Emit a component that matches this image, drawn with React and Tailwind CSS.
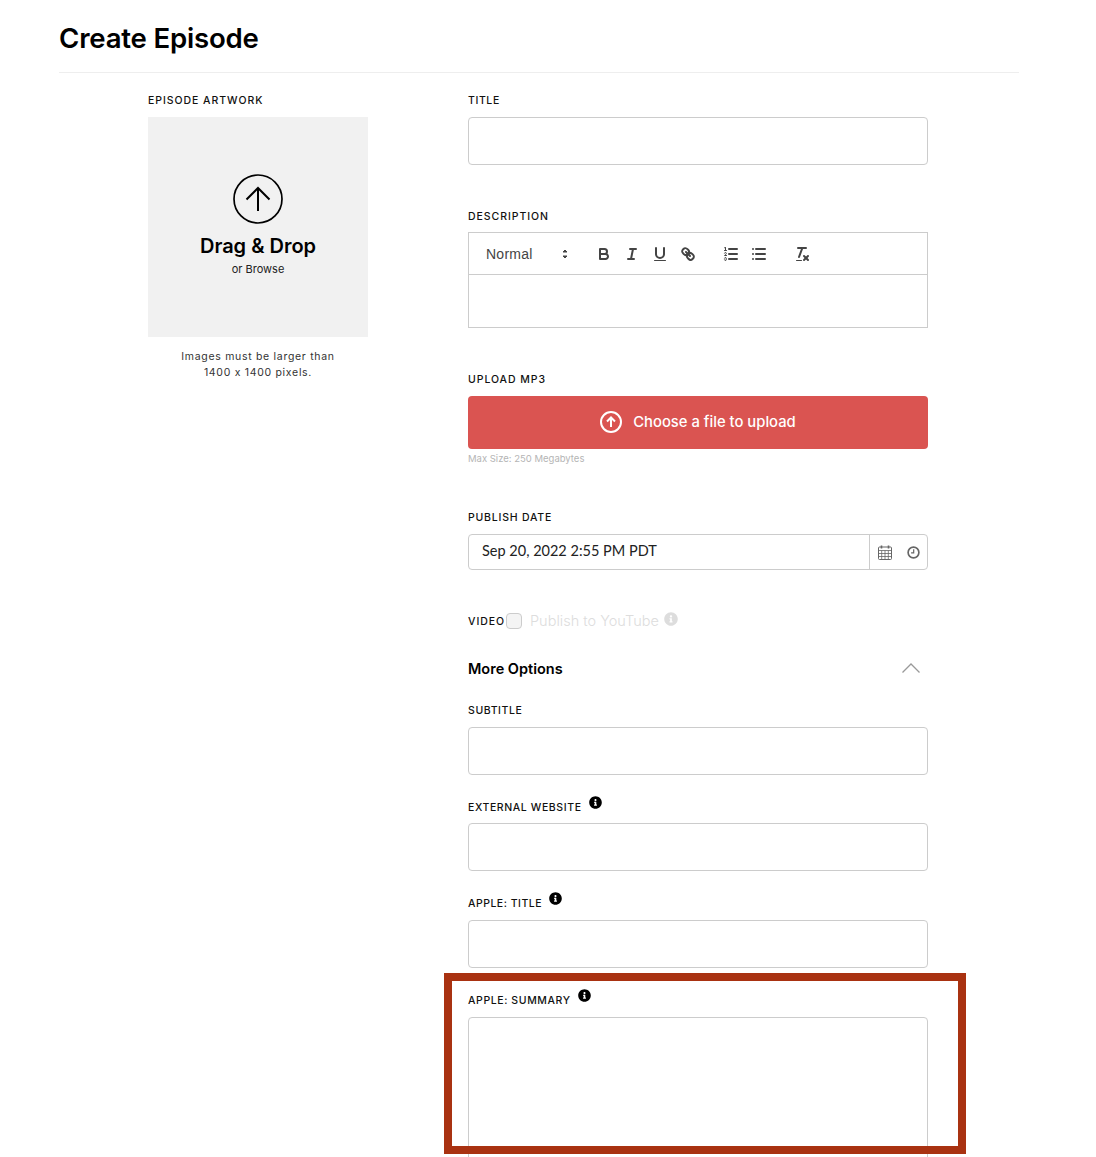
import { FaInfoCircle } from 'react-icons/fa'

const FONT = "font-['Inter','Noto_Sans',sans-serif]"

function Label({ children, info, className = '' }) {
  return (
    <div className={`flex items-end h-[16px] mb-[9px] text-[10.5px] leading-[14px] font-medium tracking-[0.95px] text-[#111] ${className}`}>
      <span className="uppercase">{children}</span>
      {info && <FaInfoCircle className="ml-[7px] mb-[6px] text-black" size={13} />}
    </div>
  )
}

function TextInput({ className = '' }) {
  return <div className={`h-[48px] rounded-[4px] border border-[#ccc] bg-white ${className}`} />
}

function QlButton({ children }) {
  return (
    <span className="flex w-[28px] h-[24px] items-center justify-center">
      <svg viewBox="0 0 18 18" className="w-[18px] h-[18px]" fill="none" stroke="#444" strokeWidth="2" strokeLinecap="round" strokeLinejoin="round">
        {children}
      </svg>
    </span>
  )
}

function Toolbar() {
  return (
    <div className="flex items-center h-[42px] pl-[9px] border-b border-[#ccc]">
      <div className="flex items-center justify-between w-[98px] pl-[8px] pr-[2px] font-['Liberation_Sans',sans-serif] text-[14px] tracking-[0.25px] font-normal text-[#444]">
        <span className="mt-[1px]">Normal</span>
        <svg viewBox="0 0 18 18" className="w-[18px] h-[18px]" fill="#444" stroke="#444" strokeWidth="1" strokeLinejoin="round">
          <polygon points="7 11 9 13 11 11 7 11" />
          <polygon points="7 7 9 5 11 7 7 7" />
        </svg>
      </div>
      <div className="flex ml-[14px]">
        <QlButton>
          <path d="M5,4H9.5A2.5,2.5,0,0,1,12,6.5v0A2.5,2.5,0,0,1,9.5,9H5A0,0,0,0,1,5,9V4A0,0,0,0,1,5,4Z" />
          <path d="M5,9h5.5A2.5,2.5,0,0,1,13,11.5v0A2.5,2.5,0,0,1,10.5,14H5a0,0,0,0,1,0,0V9A0,0,0,0,1,5,9Z" />
        </QlButton>
        <QlButton>
          <line x1="7" x2="13" y1="4" y2="4" />
          <line x1="5" x2="11" y1="14" y2="14" />
          <line x1="8" x2="10" y1="14" y2="4" />
        </QlButton>
        <QlButton>
          <path d="M5,3V9a4.012,4.012,0,0,0,4,4H9a4.012,4.012,0,0,0,4-4V3" />
          <rect height="1" rx=".5" ry=".5" width="12" x="3" y="15" fill="#444" strokeWidth="0" />
        </QlButton>
        <QlButton>
          <line x1="7" x2="11" y1="7" y2="11" />
          <path d="M8.9,4.577a3.476,3.476,0,0,1,.36,4.679A3.476,3.476,0,0,1,4.577,8.9C3.185,7.5,2.035,6.4,4.217,4.217S7.5,3.185,8.9,4.577Z" />
          <path d="M13.423,9.1a3.476,3.476,0,0,0-4.679-.36,3.476,3.476,0,0,0,.36,4.679c1.392,1.392,2.5,2.542,4.679.36S14.815,10.5,13.423,9.1Z" />
        </QlButton>
      </div>
      <div className="flex ml-[15px]">
        <QlButton>
          <line x1="7" x2="15" y1="4" y2="4" />
          <line x1="7" x2="15" y1="9" y2="9" />
          <line x1="7" x2="15" y1="14" y2="14" />
          <line x1="2.5" x2="4.5" y1="5.5" y2="5.5" strokeWidth="1" />
          <path d="M3.5,6A0.5,0.5,0,0,1,3,5.5V3.085l-0.276.138A0.5,0.5,0,0,1,2.053,3c-0.124-.247-0.023-0.324.224-0.447l1-.5A0.5,0.5,0,0,1,4,2.5v3A0.5,0.5,0,0,1,3.5,6Z" fill="#444" stroke="none" />
          <path d="M4.5,10.5h-2c0-.234,1.85-1.076,1.85-2.234A0.959,0.959,0,0,0,2.5,8.156" strokeWidth="1" />
          <path d="M2.5,14.846a0.959,0.959,0,0,0,1.85-.109A0.7,0.7,0,0,0,3.75,14a0.688,0.688,0,0,0,.6-0.736,0.959,0.959,0,0,0-1.85-.109" strokeWidth="1" />
        </QlButton>
        <QlButton>
          <line x1="6" x2="15" y1="4" y2="4" />
          <line x1="6" x2="15" y1="9" y2="9" />
          <line x1="6" x2="15" y1="14" y2="14" />
          <line x1="3" x2="3" y1="4" y2="4" />
          <line x1="3" x2="3" y1="9" y2="9" />
          <line x1="3" x2="3" y1="14" y2="14" />
        </QlButton>
      </div>
      <div className="flex ml-[15px]">
        <QlButton>
          <line x1="5" x2="13" y1="3" y2="3" />
          <line x1="6" x2="9.35" y1="12" y2="3" />
          <line x1="11" x2="15" y1="11" y2="15" />
          <line x1="15" x2="11" y1="11" y2="15" />
          <rect x="3" y="15" rx=".5" ry=".5" width="6" height="1" fill="#444" strokeWidth="0" />
        </QlButton>
      </div>
    </div>
  )
}

function CalendarIcon() {
  return (
    <svg viewBox="0 0 14 15" className="w-[14px] h-[15px]" fill="none" stroke="#666" strokeWidth="1">
      <rect x="0.5" y="2" width="13" height="12.5" rx="1" />
      <path d="M0.5 5.5h13M0.5 8.5h13M0.5 11.5h13M3.7 5.5v9M7 5.5v9M10.3 5.5v9" strokeWidth="0.8" />
      <path d="M3.5 0.5v3M10.5 0.5v3" strokeWidth="1.6" />
    </svg>
  )
}

function ClockIcon() {
  return (
    <svg viewBox="0 0 14 14" className="w-[13px] h-[13px]" fill="none" stroke="#666">
      <circle cx="7" cy="7" r="5.8" strokeWidth="1.8" />
      <path d="M7.2 3.6v3.7H4.4" strokeWidth="1.3" />
    </svg>
  )
}

export default function App() {
  return (
    <div className={`relative h-[1157px] overflow-hidden bg-white text-[#111] ${FONT}`}>
      <div className="px-[59px]">
        <h1 className="h-[73px] w-[960px] border-b border-[#eee] pt-[20px] text-[27.6px] leading-[36px] font-semibold tracking-[-0.2px] text-black">
          Create Episode
        </h1>

        <div className="flex pt-[19px]">
          {/* artwork column */}
          <div className="ml-[89px] w-[220px]">
            <Label>Episode Artwork</Label>
            <div className="flex h-[220px] flex-col items-center bg-[#f1f1f1] pt-[57px]">
              <svg viewBox="0 0 50 50" className="w-[50px] h-[50px]" fill="none" stroke="#000" strokeWidth="1.7">
                <circle cx="25" cy="25" r="24" />
                <path d="M25 37V14M13.5 25.5L25 14l11.5 11.5" strokeWidth="2" />
              </svg>
              <div className="mt-[8px] text-[20px] leading-[28px] font-semibold text-black">Drag &amp; Drop</div>
              <div className="mt-[1px] text-[11px] leading-[16px] text-[#222]">or Browse</div>
            </div>
            <p className="mt-[12px] text-center text-[10.5px] leading-[16px] tracking-[0.7px] text-[#333]">
              Images must be larger than
              <br />
              1400 x 1400 pixels.
            </p>
          </div>

          {/* form column */}
          <div className="ml-[100px] w-[460px]">
            <Label className="!tracking-[0.6px]">Title</Label>
            <TextInput />

            <Label className="mt-[43px]">Description</Label>
            <div className="mt-[-1px] h-[96px] border border-[#ccc]">
              <Toolbar />
            </div>

            <Label className="mt-[43px]">Upload MP3</Label>
            <div className="flex h-[53px] items-center justify-center rounded-[4px] bg-[#da5451] text-white">
              <svg viewBox="0 0 22 22" className="mb-[2px] w-[22px] h-[22px]" fill="none" stroke="#fff" strokeWidth="2">
                <circle cx="11" cy="11" r="10" />
                <path d="M11 16V6.5M7 10.5l4-4 4 4" />
              </svg>
              <span className="ml-[11px] mb-[1px] text-[14.8px] font-medium">Choose a file to upload</span>
            </div>
            <div className="mt-[3px] text-[9.5px] leading-[14px] text-[#b5b5b5]">Max Size: 250 Megabytes</div>

            <Label className="mt-[43px] !tracking-[0.8px]">Publish Date</Label>
            <div className="flex h-[36px] rounded-[4px] border border-[#ccc]">
              <div className="flex-1 pl-[13px] font-['Lato',sans-serif] text-[14.5px] leading-[31px] text-[#222]">Sep 20, 2022 2:55 PM PDT</div>
              <div className="flex w-[58px] items-center gap-[15px] border-l border-[#ccc] pl-[8px]">
                <CalendarIcon />
                <ClockIcon />
              </div>
            </div>

            <div className="mt-[43px] flex h-[16px] items-center">
              <span className="mt-[2px] text-[10.5px] font-medium tracking-[0.95px] text-[#111]">VIDEO</span>
              <span className="ml-[1px] h-[16px] w-[16px] rounded-[4px] border border-[#ccc] bg-[#f4f4f4]" />
              <span className="ml-[8px] text-[14.5px] font-light text-[#ddd]">Publish to YouTube</span>
              <FaInfoCircle className="ml-[5px] mb-[4px] text-[#ddd]" size={14} />
            </div>

            <div className="mt-[24px] flex h-[32px] items-center justify-between pr-[8px]">
              <span className="text-[14.5px] font-semibold text-black">More Options</span>
              <svg viewBox="0 0 18 10" className="mb-[2px] w-[18px] h-[10px]" fill="none" stroke="#999" strokeWidth="1.3">
                <path d="M0.5 9.5L9 1l8.5 8.5" />
              </svg>
            </div>

            <Label className="mt-[17px] !tracking-[0.6px]">Subtitle</Label>
            <TextInput />

            <Label className="mt-[24px] !mb-[8px] !tracking-[0.6px]" info>External Website</Label>
            <TextInput />

            <Label className="mt-[24px] !tracking-[0.5px]" info>Apple: Title</Label>
            <TextInput />

            <Label className="mt-[24px] !tracking-[0.6px]" info>Apple: Summary</Label>
            <div className="h-[200px] rounded-[4px] border border-[#ccc]" />
          </div>
        </div>
      </div>

      {/* annotation drawn over the screenshot */}
      <div className="absolute left-[444px] top-[973px] h-[181px] w-[522px] border-[8px] border-[#a93211]" />
    </div>
  )
}
